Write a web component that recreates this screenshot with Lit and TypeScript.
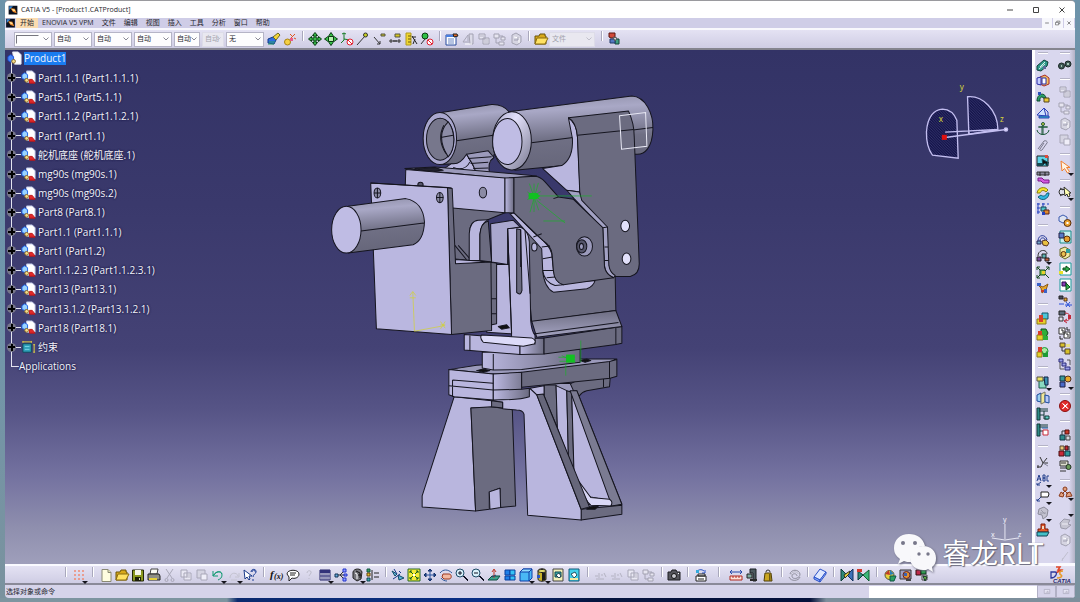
import { LitElement, html, svg, css } from 'lit';
import { customElement, property } from 'lit/decorators.js';

/* Each glyph is a list of layers, "fill,stroke,path", on a 16 x 16 grid. */
const GLYPHS: Record<string, string[]> = {
  brush: ['#2f6fe0,#123a8c,M2 8l5-2 3 3-2 4-6-1z', '#f4d63a,#6d6a20,M7 6l5-4 2 2-4 5z', '-,#2b9a6a,M2 13h6M3 11h6'],
  wizard: ['#f5d042,#a98213,M2.5 11a3 3 0 1 0 6 0a3 3 0 1 0-6 0', '-,#e0551f,M8 8l5-5M8 3l2 2M12 7l2 1', '#e85c8a,-,M8 7h3v3h-3z'],
  move4: ['#39b54a,#073c10,M8 1.500l2.500 3h-1.500v2.500h2.500v-1.500l3 2.500-3 2.500v-1.500h-2.500v2.500h1.500l-2.500 3-2.500-3h1.500v-2.500h-2.500v1.500l-3-2.500 3-2.500v1.500h2.500v-2.500h-1.500z'],
  snap4: ['#39c54a,#0a3b12,M8 1.500l2 3 1.500 1.500 3 2-3 2-1.500 1.500-2 3-2-3-1.500-1.500-3-2 3-2 1.500-1.500z', '#b9f0b0,#0a3b12,M5.500 5.500h5v5h-5z'],
  axisNo: ['-,#147a24,M5 2v7l-3 3M5 8l6 1M3 3l2-1 2 1', '#fff,#e02030,M8 11a3 3 0 1 0 6 0a3 3 0 1 0-6 0M9 9l4 4'],
  pin: ['-,#333,M2 14l8-9', '#c8d020,#333,M8.500 4a2 2 0 1 0 4 0a2 2 0 1 0-4 0'],
  lineIn: ['-,#333,M3 6l6 7M9 10v3h-3', '#c8c020,#554,M10 3h4v2h-4z'],
  dimIn: ['-,#333,M2 10h12M4 8v4M12 8v4M7 9v2M9 9v2', '#d8c820,#554,M8 3h5v3h-5z'],
  ruler: ['#f0d630,#b09a20,M3 2h5v12h-5z', '-,#6b5b10,M5 5h3M5 8h3M5 11h3', '-,#222,M9 5l5 8M12 8l-2 5M9 6h4'],
  greenNo: ['#2fbf45,#0a3b12,M3 5a3 3 0 1 0 6 0a3 3 0 1 0-6 0', '-,#333,M2 13l4-5', '#fff,#e02030,M8 11a3 3 0 1 0 6 0a3 3 0 1 0-6 0M9 9l4 4'],
  props: ['#fff,#24489c,M2 4h10v10h-10z', '#4a7fe0,-,M2 4h10v2h-10z', '-,#6b87c4,M4 8h6M4 10h6M4 12h6', '#e06a2a,#222,M9 3h4l1 2-4 1z'],
  offTree: ['-,#a8a7b8,M3 11l5-7M8 4v8M3 11h4', '#dcdbe8,#a3a2b2,M9 3h4v10h-3z', '-,#fff,M5 13h7'],
  offPage: ['#e6e5f0,#a3a2b2,M3 3h6v5h-6zM7 7h6v6h-6z', '-,#b5b4c4,M4 5h4M8 9h4M8 11h4'],
  offLinks: ['#e6e5f0,#a3a2b2,M2 3h5v4h-5zM9 6h4v3h-4zM7 11h5v3h-5z', '-,#a3a2b2,M4 7v5h3M7 5h4v1'],
  offGear: ['#d6d5e2,#a3a2b2,M4 4l4-2 5 3v6l-4 3-5-2z', '-,#fff,M6 6l5 1v5', '-,#9f9eb0,M6 9h4v-3'],
  offCut: ['-,#a8a7b8,M4 2l6 9M11 2l-6 9M3 13a1.500 1.500 0 1 0 3 0a1.500 1.500 0 1 0-3 0M9 13a1.500 1.500 0 1 0 3 0a1.500 1.500 0 1 0-3 0'],
  offCopy: ['#e9e8f3,#a8a7b8,M3 3h6v7h-6zM6 6h7v7h-7z', '-,#b8b7c6,M8 8h4M8 10h4'],
  offPaste: ['#d5d4e2,#a8a7b8,M3 3h8v8h-8z', '#efeef8,#a8a7b8,M7 7h6v6h-6z'],
  offRedo: ['-,#c4c3d0,M4 11c0-6 7-6 8-2M13 6v4h-4M5 13h6'],
  offDots: ['-,#b4b3c2,M2 9h3M6 6v5M8 8h2M11 6l2 4M3 12h8'],
  offQ: ['-,#bdbccb,M6 6c0-3 5-3 4 0l-2 3M8 11v1'],
  folder: ['#d8a81a,#6b540a,M2 5h4l1-2h5v2h1v8h-11z', '#ffe163,#8a6c10,M4 7h11l-3 6h-10z'],
  catalog: ['#d04a3a,#5a1410,M3 2h6v5h-4l-2-1z', '#3f9f80,#16443a,M9 8h4v5h-4z', '#5478c0,#203a6a,M4 8h5v4h-5z', '#efefef,#555,M7 6l4 1-2 3z'],
  griddots: ['-,#ef8a72,M3 4h2M7 4h2M11 4h2M3 8h2M7 8h2M11 8h2M3 12h2M7 12h2M11 12h2M4 3v2M8 3v2M12 3v2M4 7v2M8 7v2M12 7v2M4 11v2M8 11v2M12 11v2'],
  newdoc: ['#fffde0,#8a8974,M4 2.500h6l3 3v9h-9z', '#e8e6b8,#8a8974,M10 2.500v3h3'],
  save: ['#8a981f,#22260a,M2.500 3h11v11h-11z', '#f6f6ea,-,M5 3h6v5h-6z', '#1d2008,-,M5 10h6v4h-6z', '#d8d8c0,-,M9 11h1v2h-1z'],
  print: ['#fbfbf4,#444,M5 2h7l-1 5h-7z', '#8f8f86,#222,M2 7h11l1 2v4h-12z', '#e4cf3a,-,M3 11h8v2h-8z'],
  undo: ['-,#0f9a72,M3 9c2-5 9-5 9-1c0 3-2 4-4 5M3 4v5h5', '-,#0f9a72,M4 8c2-4 7-5 8-1'],
  whats: ['#fff,#1a3a8a,M2 3l1 9 2-2 2 3 1-1-1-3h3z', '-,#1d3f96,M9 5c0-4 6-3 5 0c0 2-3 2-3 5M11 12v2', '-,#1d3f96,M10 5c0-3 4-2 3 0'],
  bubble: ['#fff,#222,M2 7c0-5 12-5 12 0c0 4-5 5-7 4l-3 3v-4z', '-,#222,M5 6h6M5 8h5'],
  table: ['#fff,#222266,M3 3h10v10h-10z', '#33337a,-,M3 3h10v3h-10z', '-,#33337a,M5 6v7M7 6v7M9 6v7M11 6v7M3 9h10'],
  graph: ['-,#333,M3 8h4l4-4M7 8l4 0M7 8l4 4', '#8ea0ff,#2233cc,M10 2h3v3h-3zM11 7h3v2h-3zM10 11h3v3h-3z', '#6ad,#135,M2 7h3v3h-3z'],
  lock: ['#77777c,#222,M4 5c1-4 8-4 9 0l-1 7-4 2-4-3z', '-,#fff,M6 6l2 1v5', '-,#111,M7 4l4 2v5M9 8h3'],
  rules: ['#38a058,#154,M2 2h3v3h-3z', '#e0c030,#641,M2 6h3v3h-3z', '#3aa,#145,M2 11h3v3h-3z', '-,#222,M7 3v10M9 6h5M9 10h5'],
  fly: ['#5fb7d8,#114a66,M2 4l5 3-2 2zM8 8l6 3-5 2z', '-,#1a3a8a,M3 12l3-2 4-3M9 4l2 2M4 2l3 5'],
  fit: ['#f4ec35,#2a6b2a,M2 2h12v12h-12z', '-,#145a20,M4 4l3 3M12 4l-3 3M4 12l3-3M12 12l-3-3M4 6v-2h2M10 4h2v2M4 10v2h2M12 10v2h-2', '#fff,-,M7 7h2v2h-2z'],
  pan: ['-,#24509c,M8 2v12M2 8h12', '#24509c,#16336b,M8 2l2 2h-4zM8 14l2-2h-4zM2 8l2-2v4zM14 8l-2-2v4z'],
  rotate: ['#f2b9a2,#9c3a24,M5 7h6c3 0 3 5 0 5h-5l-2-2z', '-,#2f5a9c,M2 6c3-4 8-4 12 0M3 11c1 2 4 3 6 3'],
  zoomin: ['#d9f1fa,#1d4b66,M2 6a4 4 0 1 0 8 0a4 4 0 1 0-8 0', '-,#112,M9 9l5 5M10 9l4 4M4 6h4M6 4v4'],
  zoomout: ['#d9f1fa,#1d4b66,M2 6a4 4 0 1 0 8 0a4 4 0 1 0-8 0', '-,#112,M9 9l5 5M10 9l4 4M4 6h4'],
  normal: ['#3ba38c,#0f4a3e,M2 13l4-4h8l-3 4z', '-,#c03a2a,M8 11v-8M6 5l2-3 2 3', '-,#247,M6 10l4-2'],
  views: ['#1f7fe8,#0a3f9c,M3 3h5v5h-5zM3 9h5v4h-5z', '#35c2f5,#0a3f9c,M8 3h5v5h-5zM8 9h5v4h-5z'],
  cube: ['#49b8f5,#0f3fa8,M2 5l3-3h9v9l-3 3h-9z', '#8fdcff,#0f3fa8,M2 5l3-3h9l-3 3z', '-,#0f3fa8,M11 5v9'],
  shade: ['#c9b22a,#222,M4 4c0-3 8-3 8 0v8c0 3-8 3-8 0z', '#1c1c1c,-,M8 5h3.500v8l-3.500 1z', '#e8e070,#222,M4 4c0-2 8-2 8 0c0 2-8 2-8 0', '#2b58c4,-,M3 8h3v3h-3z'],
  hide: ['#f2f0b8,#444,M3 2h10v12h-10z', '#39b0a8,#145,M5 5h6v5h-6z', '#fff,#245,M6 8l3-2 2 3-2 2z'],
  swap: ['#43d0ea,#145a78,M3 2h10v12h-10z', '#fff,#256,M5 7l4-2 2 3-3 3z', '#f2e9a0,-,M4 11h8v2h-8z'],
  camera: ['#55555c,#1c1c20,M2 5h3l1-2h4l1 2h3v8h-12z', '#c8c8d0,#111,M5.500 9a2.500 2.500 0 1 0 5 0a2.500 2.500 0 1 0-5 0', '#fff,-,M12 6h1v1h-1z'],
  printer2: ['-,#2753c4,M4 6c0-4 5-4 7-2M12 3v3h-3', '#3ad,-,M3 3h3v3h-3z', '#fff,#222,M3 9h10v5h-10zM5 7h7v2h-7z', '-,#222,M5 12h6'],
  measure: ['-,#2346a8,M2 5h12M4 3l-2 2 2 2M12 3l2 2-2 2', '#fbe0d8,#b02a20,M2 9h12v4h-12z', '-,#b02a20,M5 9v2M8 9v2M11 9v2'],
  caliper: ['#4d5a60,#1a2024,M6 2h6v12h-3v-8h-3z', '#7fa8a0,#222,M3 7h5v4h-5z', '#2a2a2a,-,M6 12h7v2h-7z'],
  weight: ['#c9a520,#4f3f08,M5 6h6l1 8h-8z', '-,#333,M6 5a2 2 0 1 1 4 0', '#6d5a10,-,M9 7h1.500v7h-1.500z'],
  swirl: ['-,#8e8e9c,M3 7c1-5 9-5 10 0c0 5-8 6-8 2c0-3 5-3 5 0M13 10c-1 4-9 5-11 0', '-,#b8b8c4,M4 8c0-4 7-4 7-1'],
  eraser: ['#dfe7ff,#2a50c8,M2 10l6-8 6 3-6 8z', '#8fb0ff,#2a50c8,M2 10l6 3v2l-6-3z', '#b8ccff,#2a50c8,M8 13l6-8v2l-6 8z'],
  flipA: ['#2f8a7a,#0c3a36,M2 2l6 6-6 6z', '#3c72b8,#10305c,M14 2l-6 6 6 6z', '#e8d23a,#332,M5 8l6-4-1 3-4 4z'],
  flipB: ['#2f8a7a,#0c3a36,M3 4l5 4-5 5z', '#3cb87a,#105c30,M14 3l-6 5 6 6z', '#d23a2a,-,M2 2h5v3h-5z'],
  mat1: ['#e8d23a,#553,M3 8a4.500 4.500 0 1 0 9 0a4.500 4.500 0 1 0-9 0', '#c0392b,-,M3 7l4-4 1 5z', '#2980b9,-,M8 3l4 4-4 1z', '#2ca060,#154,M8 9h6l-2 5h-4z'],
  mat2: ['#a0a0c0,#333,M2 3h11v9h-11z', '#e09030,#622,M5 8a3.500 3.500 0 1 0 7 0a3.500 3.500 0 1 0-7 0', '#3a60b0,-,M6 6h3v3h-3z', '#444,-,M8 12h5v2h-5z'],
  mat3: ['#c02a4a,#311,M2 3h5v5h-5z', '#2aa04a,#132,M7 2h5v5h-5z', '#dfe0f0,#444,M8 8h5v5h-5z', '#6fc04a,#132,M9 9l4 1-2 4z'],
  clip: ['#2f9a8a,#0d4038,M2 9l7-6 4 2-1 4-6 5-4-1z', '-,#d8f0ea,M5 10l5-5M4 12l6-5', '#5a6a9a,-,M8 9h3v3h-3z'],
  contact: ['#f0c060,#a82a2a,M5 4l5-2 4 3v6l-5 2-4-2z', '#c4ccff,#2a2aa8,M2 5l4-1v8l-4-1z', '#fff,#2a2aa8,M7 5h4v6h-4z'],
  offset: ['#2aa06a,#0a4a2a,M2 12c0-8 8-9 9-3h-3c0-2-4-1-3 3z', '#e8c830,#542,M9 9h5v4h-5z', '#2a50b8,-,M3 3h3v3h-3z'],
  angle: ['#cfe0ff,#2a40b8,M2 10l7-7 2 8z', '#2fb0c0,#2a40b8,M4 11h10v2h-10z', '-,#2a40b8,M9 3l4 4v4'],
  anchor: ['-,#1f5a3a,M8 4v10M4 6h8M2 9c1 6 11 6 12 0', '#c8d040,#1f5a3a,M6.500 3a1.500 1.500 0 1 0 3 0a1.500 1.500 0 1 0-3 0', '-,#1f5a3a,M3 6h10M7 5v9'],
  paperclip: ['-,#77778a,M3 12l6-8c2-1 4 1 3 2l-5 7c-1 1-3 0-2-1l4-6'],
  quick: ['#5fd4e8,#222,M2 3h11v10h-11z', '#164a54,-,M2 10h6v3h-6z', '#111,#164a54,M7 6l1 6 2-2 2 3 1-1-1-2h2z', '#e04a3a,-,M10 2h3v3h-3z'],
  flex: ['#8a8a9c,#333,M2 3h12v3h-12z', '#d45ae0,#7a1a88,M3 9h4l2 2h5v3h-6l-2-2h-3z', '-,#222,M5 3v4M10 3v4'],
  change: ['#f4e62a,#8a8010,M2 8c1-6 8-7 11-3l-2 2c-3-3-5-1-6 1z', '#2fb8e0,#15607a,M3 12l3-2c2 2 5 1 6-2h2c0 6-7 9-11 4z'],
  reuse: ['-,#2340c0,M2 3h3M7 3h3M12 3h2M2 7h3M2 11h3M3 2v11M8 2v4', '#4fc0c8,#145,M6 6h5v4h-5z', '#e08a2a,#522,M9 9h5v4h-5z', '#2340c0,-,M7 11h3v3h-3z'],
  manip: ['-,#2b3f9c,M3 9c0-7 8-7 9-1M5 9c0-4 5-4 5-1', '#e8c040,#532,M7 9l4-1 3 3-2 3-4-1z', '#7ac,#225,M2 9h4v3h-4z'],
  snapPart: ['-,#333,M3 8c0-7 9-7 9-2', '#7a4a9a,#222,M2 9h4v4h-4z', '#5ab0b0,#222,M7 6h4v4h-4z', '#c05a3a,#222,M10 10h4v3h-4z'],
  explode: ['-,#174a20,M2 3l4 4M14 3l-4 4M2 14l4-4M14 14l-4-4M2 6v-3h3M11 3h3v3M2 11v3h3', '#7ac84a,#174a20,M5 6h5v5h-5z', '#e8d02a,-,M7 7h3v3h-3z'],
  clash: ['#e8a82a,#8a5a1a,M3 5l5 2 5-3-2 6-4 3-1-5z', '#3a62c8,-,M2 3h4v3h-4zM9 9h3v4h-3z', '#c83a2a,-,M6 10h3v2h-3z'],
  stackRed: ['#4fc4d8,#156,M7 2h6v6h-6z', '#e8cf2a,#8a7a1a,M2 8h9v5h-9z', '#d8402a,-,M4 4h4v7h-4z'],
  stackGreen: ['#2fae3a,#134a18,M6 2h5l2 4-2 4h-5z', '#e8cf2a,#8a7a1a,M2 8h6v5h-6z', '#d8402a,-,M3 4h4v4h-4z', '#2fae3a,-,M8 9h5v4h-5z'],
  stackRing: ['#a8e8a0,#1d9a34,M6 8a3.500 3.500 0 1 0 7 0a3.500 3.500 0 1 0-7 0M7 8a2.500 2.500 0 1 0 5 0', '#e8cf2a,#8a7a1a,M2 9h5v5h-5z', '#d8402a,-,M3 4h4v5h-4z', '#1d9a34,-,M8 10h5v4h-5z'],
  section: ['#8adac0,#185a48,M4 6h7v8h-7z', '#e8e060,#554,M2 3h6v4h-6z', '#3a8fb0,#124,M9 3h4v8h-3z'],
  mirror: ['#9ad0f0,#1a4a9c,M2 5l4-2v9l-4-1z', '#f0e89a,#776,M6 4l4-2v10l-4 2z', '#b8c8f8,#1a4a9c,M10 5l4 1v7l-4-1z'],
  treeTeal: ['#2f8a86,#123a38,M2 2h3v12h-3z', '-,#123a38,M4 3h9M4 5h9M5 9h4M9 5v8h4', '#5fd0c8,#123a38,M10 10h4v3h-4z'],
  treeRed: ['#2f8a86,#123a38,M2 2h3v12h-3z', '-,#123a38,M4 3h9M4 5h9M5 9h4', '#fff,#c82a3a,M8 8h5v5h-5z', '-,#2f6ab0,M7 6h6'],
  weld: ['-,#333,M5 3l3 6 4-5M2 13h4l2-4h5M3 11v3', '-,#8a8aa0,M8 9l5 3'],
  textNote: ['-,#24408c,M2 10l2-6 2 6M3 8h3M8 4v6M8 4h2v3h-2M8 7h2v3h-2M14 5h-2v5h2', '-,#24408c,M2 14l4-3M2 12v2h3'],
  flag: ['#fff,#222,M6 4h7l1 2-1 3h-7z', '-,#24408c,M2 13l4-4M2 11v2h3'],
  ghost: ['#c3c2d0,#8a8a98,M4 4l5-2 4 3-1 6-4 3-1-4-4-1z', '-,#9a9aa8,M6 5l4 4M5 8h6'],
  stamp: ['#e85a2a,#7a1a0a,M6 2h4v5h3v3h-10v-3h3z', '#45c0c8,#145,M2 10h12l-2 4h-10z', '#f0d8c0,-,M7 4h2v3h-2z'],
  gears: ['#3f5a56,#1a2624,M1.500 9a3 3 0 1 0 6 0a3 3 0 1 0-6 0M8 7a3 3 0 1 0 6 0a3 3 0 1 0-6 0', '#a8c4b8,-,M4 8h1v2h-1zM10 6h2v2h-2z'],
  arrow: ['#fff4e4,#f08030,M4 2l1 10 2.500-2.500 3 4.500 2-1.500-3-4h3.500z'],
  select2: ['#dfe0ea,#333,M2 8a3 3 0 1 0 6 0a3 3 0 1 0-6 0', '#ffffb0,#333,M7 3l1 9 2-2 1 3 2-1-1-3h2z', '-,#333,M3 4l3 2M3 12l3-2'],
  gearA: ['#dfe4f0,#3a5ab0,M2 4l4-2 4 2v4l-4 2-4-2z', '#e8a030,#5a2f0a,M7 10a3.500 3.500 0 1 0 7 0a3.500 3.500 0 1 0-7 0', '#fff,-,M9.500 9h2v2h-2z'],
  gearB: ['#c8f0f0,#1a8a8a,M3 2h11v12h-11z', '#5a7ac8,#224,M2 4h5v5h-5z', '#e8a030,#5a2f0a,M7 10a3 3 0 1 0 6 0a3 3 0 1 0-6 0'],
  gearC: ['#f0e8a0,#6a6a2a,M3 4l5-2 5 3v6l-5 3-5-3z', '#2fa0a0,-,M9 4h4v4h-4z', '#e8c050,#5a2f0a,M4 9a2.500 2.500 0 1 0 5 0a2.500 2.500 0 1 0-5 0'],
  insert1: ['#fff,#1a9a9a,M3 2h11v12h-11z', '#2fb04a,#0a4a1a,M6 7h3v-2l4 3-4 3v-2h-3z', '#e8e02a,-,M2 10h4v3h-4z'],
  insert2: ['#fff,#1a9a9a,M3 2h11v12h-11z', '#8a3ab8,#2a0a4a,M5 5h4v4h-4z', '#2fb04a,#0a4a1a,M9 6l4 4-4 3z'],
  replace: ['-,#2a50d8,M9 9l4 5M13 9l-4 5M8 12h7', '#4a4a5a,#222,M2 3h4v3h-4z', '#e8b02a,#532,M7 5h3v3h-3z', '-,#2a50d8,M2 11h5'],
  reorder: ['#5a6a7a,#222,M2 2h6v4h-6z', '-,#c02a3a,M8 4c7 0 7 8 0 8M10 14l-3-2 3-2', '#dfe0ea,#333,M2 8h4v4h-4z', '#c02a3a,-,M11 6h3v4h-3z'],
  number: ['#fff,#333,M2 3h6v6h-6zM7 7h6v6h-6z', '-,#222,M4 5h2v3M9 9h2v3M10 2v3h3M3 11v3h3'],
  selLoad: ['#d8c02a,#543,M3 2h5v4h-5zM8 8h5v5h-5z', '-,#333,M5 6v4h3', '#e8e08a,-,M9 3h4v3h-4z'],
  manage: ['#9aa0e8,#2a2a7a,M2 2h4v3h-4zM5 6h4v3h-4zM8 10h5v3h-5z', '-,#555,M3 5v7h4M10 3h3v5'],
  multi: ['#3a9a9a,#134,M3 3h5v5h-5z', '#e8a82a,#532,M8 6a3 3 0 1 0 6 0a3 3 0 1 0-6 0', '#4a6ac8,#224,M3 9h5v5h-5z'],
  cancel: ['#e02a2a,#8a1010,M2.500 8a5.500 5.500 0 1 0 11 0a5.500 5.500 0 1 0-11 0', '-,#fff,M5.500 5.500l5 5M10.500 5.500l-5 5M6 5.500l5 5M10.500 6l-5 5'],
  sceneA: ['#2f8a8a,#134,M3 8h5v5h-5z', '#c83a2a,#511,M8 3h4v4h-4z', '#d8d8e0,#444,M9 9h4v4h-4z', '-,#333,M5 4v4M5 4h3'],
  sceneB: ['#c82a3a,#411,M2 8h5v5h-5zM8 3h3v4h-3z', '#2f9a9a,#134,M8 8h5v5h-5z', '#e8c87a,#543,M3 3h4v4h-4z', '-,#222,M12 3v4'],
  sceneC: ['#dfe0d0,#333,M3 2h8v5h-8z', '-,#333,M4 4h5M3 9h8M3 12h6', '#6a9a5a,#232,M9 8a2.500 2.500 0 1 0 5 0a2.500 2.500 0 1 0-5 0'],
  people: ['#e0a080,#8a3a1a,M6 5a2 2 0 1 0 4 0a2 2 0 1 0-4 0M2 12l2-4 3 2-1 3zM9 13l1-4 3-1 2 4z', '-,#8a3a1a,M5 10l3-3 3 3'],
  offShape: ['#c6c5d2,#9c9bab,M3 7l4-4 6 1-2 4 3 1-5 4-5-1z', '-,#efeef6,M5 8h6'],
  offPen: ['-,#c0bfce,M5 12l6-8M5 13l1-3'],
  part: ['#fff,#bfc8e8,M6 1h6l3 3v9h-9z', '#9ad4ff,#1c5fe8,M1 5l3-2 3 2v4l-3 1-3-1z', '#f4dc8a,#8a6a2a,M4 11a2 2 0 1 0 4 0a2 2 0 1 0-4 0', '#e02a2a,#c01414,M9 10h3l3 4h-6z'],
  product: ['#fff,#dfe4f4,M6 1h6l3 3v10h-7z', '#4a8af8,#1c4fd8,M1 6l3-2 3 2v4l-3 2-3-2z', '#f4dc8a,#8a6a2a,M5 11a2 2 0 1 0 4 0a2 2 0 1 0-4 0'],
  constraint: ['#2fa0b8,#0c4a5c,M2 4h9v9h-9z', '-,#e8d840,M2 1v2M11 1v2M2 2h9M13 5h2M13 13h2M14 5v8', '-,#7ad8e8,M4 7h5M4 10h5'],
  catia: ['#0a0f1c,-,M1 1h14v14h-14z', '#3a8ad8,-,M2 2h6l-6 6z', '#f08a2a,-,M4 5l7 1 3 7-6-2z', '#ffe9a0,-,M6 6l4 1 2 3-4-1z'],
  min: ['-,#444,M5 8h6'],
  max: ['-,#444,M5.500 5.500h5v5h-5z'],
  close: ['-,#444,M5.500 5.500l5 5M10.500 5.500l-5 5'],
  restore: ['-,#555,M4 7h5v4h-5zM6 7v-2h5v4h-2'],
  pane: ['#e6e5f4,#a9a8bc,M4 5h8v6h-8z', '-,#a9a8bc,M6 9h5M9 7v2'],
};

@customElement('cad-icon')
export class CadIcon extends LitElement {
  @property() name = '';
  static styles = css`
    :host { display: block; width: 16px; height: 16px; }
    svg { display: block; width: 100%; height: 100%; }
    text { font: italic 700 11px 'Liberation Serif', serif; fill: #111; }
    .arg { font-size: 8px; }
  `;
  render() {
    if (this.name === 'fx') {
      return html`<svg viewBox="0 0 16 16"><text x="1" y="11">f</text><text class="arg" x="5" y="12">(x)</text></svg>`;
    }
    return html`<svg viewBox="0 0 16 16">
      ${(GLYPHS[this.name] ?? []).map((layer) => {
        const [fill, stroke, d] = layer.split(',');
        return svg`<path d=${d} fill=${fill === '-' ? 'none' : fill} stroke=${stroke === '-' ? 'none' : stroke} stroke-width="1"></path>`;
      })}
    </svg>`;
  }
}

/* Toolbar entries: an icon name, "name>" for one with a fly-out, or a divider. */
type Entry = string;

@customElement('cad-toolbar')
export class CadToolbar extends LitElement {
  @property({ type: Array }) items: Entry[] = [];
  @property({ type: Boolean, reflect: true }) vertical = false;
  static styles = css`
    :host { display: flex; align-items: center; }
    :host([vertical]) { flex-direction: column; }
    button { position: relative; flex: none; width: 16px; height: 16px; padding: 0; border: 0; background: none; }
    button.roomy { height: 17px; }
    .fly { position: absolute; right: -1px; bottom: -1px; width: 0; height: 0; border: 3px solid transparent; border-top-color: #15151c; border-bottom: 0; }
    .sep { flex: none; display: flex; justify-content: center; width: 11px; height: 10px; align-self: flex-start; }
    .sep::before { content: ''; width: 1px; background: #a9a8bc; border-right: 1px solid #fff; }
    .sep.narrow { width: 9px; }
    .sep.wide { width: 19px; }
    :host([vertical]) .sep { width: 10px; height: 11px; margin: 0; align-items: center; align-self: center; }
    :host([vertical]) .sep::before { width: 10px; height: 1px; border: 0; border-bottom: 1px solid #fff; background: #b4b3c6; }
    :host([vertical]) .sep.narrow { height: 9px; }
    :host([vertical]) .sep.medium { height: 13px; }
    :host([vertical]) .sep.wide { height: 15px; }
  `;
  render() {
    let roomy = false;
    return this.items.map((item) => {
      if (item === '=') { roomy = true; return null; }
      if (item.startsWith('|')) {
        const size = { '|n': 'narrow', '|m': 'medium', '|w': 'wide' }[item] ?? '';
        return html`<span class="sep ${size}"></span>`;
      }
      const name = item.replace('>', '');
      return html`<button class=${roomy ? 'roomy' : ''} aria-label=${name || 'tool'}>
        <cad-icon name=${name}></cad-icon>${item.endsWith('>') ? html`<span class="fly"></span>` : null}
      </button>`;
    });
  }
}

const TOP_A = ['brush', 'wizard', '|n', 'move4', 'snap4', 'axisNo', 'pin', 'lineIn', 'dimIn', 'ruler', 'greenNo', '|n', 'props', 'offTree', 'offPage', 'offLinks', 'offGear', '|n', 'folder'];
const BOTTOM = ['|', 'griddots>', '|', 'newdoc', 'folder', 'save', 'print', 'offCut', 'offCopy', 'offPaste', 'undo>', 'offRedo>', 'whats', '|', 'fx', 'bubble', 'offQ', 'table>', 'graph', 'lock>', 'rules', '|n', 'fly', 'fit', 'pan', 'rotate', 'zoomin', 'zoomout', 'normal', 'views', 'cube>', 'shade>', 'hide', 'swap', '|', 'offDots', 'offDots', 'offCopy', 'offLinks', '|n', 'camera', '|', 'printer2', '|w', 'measure', 'caliper', 'weight', '|', 'swirl', '|n', 'eraser', '|', 'flipA', 'flipB', '|', 'mat1', 'mat2', 'mat3'];
const DOCK_A = ['clip', 'contact', 'offset', 'angle', 'anchor', 'paperclip', 'quick', 'flex', 'change', 'reuse', '|w', 'manip', 'snapPart>', 'explode', 'clash', '|w', 'stackRed', 'stackGreen', 'stackRing', '|w', 'section>', 'mirror', 'treeTeal', 'treeRed', '|w', '=', 'weld', 'textNote>', 'flag>', 'ghost>', 'stamp'];
const DOCK_B = ['gears', '|', 'offPage', 'offLinks', 'offGear', 'offPaste', '|', 'arrow>', '|n', 'select2>', '|m', 'gearA', 'gearB', 'gearC', 'insert1', 'insert2', 'replace', 'reorder', 'number', 'selLoad', 'manage', 'multi>', '|n', 'cancel', '|m', 'sceneA', 'sceneB', 'sceneC', '|n', 'people>', '>', 'offShape', 'offGear', 'offPen'];

const MENUS = ['文件', '编辑', '视图', '插入', '工具', '分析', '窗口', '帮助'];
const PARTS = ['Part1.1.1 (Part1.1.1.1)', 'Part5.1 (Part5.1.1)', 'Part1.1.2 (Part1.1.2.1)', 'Part1 (Part1.1)', '舵机底座 (舵机底座.1)', 'mg90s (mg90s.1)', 'mg90s (mg90s.2)', 'Part8 (Part8.1)', 'Part1.1 (Part1.1.1)', 'Part1 (Part1.2)', 'Part1.1.2.3 (Part1.1.2.3.1)', 'Part13 (Part13.1)', 'Part13.1.2 (Part13.1.2.1)', 'Part18 (Part18.1)'];

const LIGHT = '#b9b6de';
const DARK = '#6b6b80';
const MID = '#9b9abb';
const face = (d: string, fill = LIGHT) => svg`<path d=${d} fill=${fill}></path>`;
const edge = (d: string) => svg`<path d=${d} fill="none"></path>`;

@customElement('cad-scene')
export class CadScene extends LitElement {
  static styles = css`
    :host { display: block; }
    svg { display: block; width: 100%; height: 100%; }
    .solid { stroke: #15151f; stroke-width: 3px; stroke-linejoin: round; }
    .green { stroke: #16b425; stroke-width: 2px; fill: none; }
    .yellow { stroke: #d3d32a; stroke-width: 2px; fill: none; }
    .compass { stroke: #c3bef0; stroke-width: 4px; }
    text { font-family: 'Noto Sans', sans-serif; stroke: none; }
    .cl { font-size: 8px; fill: #d8d83a; }
    .al { font-size: 7px; fill: #f2f2fa; }
  `;
  render() {
    return html`<svg viewBox="5 50 1027 513" preserveAspectRatio="xMidYMid slice" role="img" aria-label="Product1">
      <defs>
        <linearGradient id="tube" x1="0" y1="0" x2=".12" y2="1">
          <stop offset="0" stop-color="#8d8da6"></stop><stop offset=".22" stop-color="#a9a8c6"></stop><stop offset=".62" stop-color="#6f6f84"></stop><stop offset="1" stop-color="#66667a"></stop>
        </linearGradient>
        <linearGradient id="round" x1="0" x2="1"><stop offset="0" stop-color="#bcb9e2"></stop><stop offset="1" stop-color="#6b6b80"></stop></linearGradient>
        <linearGradient id="rim" x1="0" y1="0" x2="1" y2="1"><stop offset="0" stop-color="#a5a4c6"></stop><stop offset=".35" stop-color="#e2e0fa"></stop><stop offset="1" stop-color="#77778e"></stop></linearGradient>
        <linearGradient id="flare" x1="0" y1="0" x2="0" y2="1"><stop offset="0" stop-color="#6d6d82"></stop><stop offset="1" stop-color="#a5a4c2"></stop></linearGradient>
        <pattern id="hatch" width="8" height="8" patternUnits="userSpaceOnUse"><rect width="8" height="8" fill="#15154a"></rect><path d="M0 0l8 8" stroke="#42427c" stroke-width="2"></path></pattern>
      </defs>

      <g class="solid" transform="translate(320 290) scale(.33333)">
        ${face('M785 262L870 262L868 288L800 300Q785 304 778 315L740 285Z', DARK)}
        ${edge('M850 264V290')}
        ${face('M387 237L470 224L780 205L890 205L868 215L605 248L520 250Z', MID)}
        ${face('M470 240L490 235L510 240L490 245Z', '#111')}
        ${face('M780 210L800 205L812 210L795 215Z', '#111')}
        ${face('M487 185L780 175V215L605 237L520 238L487 232Z', 'url(#round)')}
        ${edge('M520 190V238')}
        ${face('M672 280L750 278L760 300L770 300L905 640L875 645L800 640L680 330Z', MID)}
        ${face('M672 283H708L712 412L672 316Z', DARK)}
        ${face('M708 285L740 300L745 500L712 412Z')}
        ${face('M740 300L755 305L762 560L745 505Z', DARK)}
        ${face('M755 310L872 630L812 618Q790 612 775 578L762 555Z')}
        ${face('M750 300L770 300L905 640L875 645Z', '#7b7b92')}
        ${face('M775 570L812 620L868 625Q880 632 872 645L812 643Q795 630 775 575Z', '#d9d7f6')}
        ${face('M783 655L905 643V670L783 687Z', DARK)}
        ${face('M805 648L835 645L825 655L800 655Z', '#111')}
        ${face('M403 318L515 330L520 350L453 352L467 660L307 648V615Z')}
        ${face('M453 352L515 348L577 357L587 645L542 650L540 592L508 603V655L467 660Z', DARK)}
        ${face('M508 603L540 592L542 650L510 655Z')}
        ${face('M515 328L605 322L630 293L650 312L783 655V687L623 673L612 370Q608 358 590 358L548 354V335L515 330Z')}
        ${face('M515 330L548 335V352L515 348Z', DARK)}
        ${face('M630 293L672 285V312L650 312Z')}
        ${face('M650 312L670 310L808 648L783 655Z', '#66667a')}
        ${face('M387 237L520 250V328L403 318L387 312Z')}
        ${face('M520 250L605 245V296L628 293V318Q600 328 520 328Z', 'url(#round)')}
        ${face('M605 245L868 213L890 207V257L870 263L605 290Z', DARK)}
        ${edge('M387 285L520 298L605 296M398 268L520 278M398 268V318M868 213V263')}
        ${face('M433 132L600 145V192L433 178Z')}
        ${face('M600 145L672 142V190L600 192Z', 'url(#round)')}
        ${face('M672 142L905 108V158L887 162L672 190Z', DARK)}
        ${edge('M450 135V180M887 112V162')}
      </g>

      <g class="solid" transform="translate(320 80) scale(.33333)">
        ${face('M500 545L530 548L532 735L510 740Z', DARK)}
        ${edge('M513 655H532M513 700H532')}
        ${face('M530 552L575 552L577 760L500 755L505 735L530 730Z')}
        ${face('M535 738L560 733L568 742L545 746Z', '#111')}
        ${face('M610 450L885 590L887 690L635 724Z', DARK)}
        ${face('M635 722L887 690L905 738L650 770Z', 'url(#flare)')}
        ${edge('M640 760L895 726')}
        ${face('M563 445L600 440Q630 450 628 500L632 720Q634 750 645 765V790L575 770Z')}
        ${face('M485 763L635 772Q652 780 642 790L610 797L490 785Q478 772 485 763Z', '#dcdaf8')}
        ${face('M398 380L560 395L500 420Q450 420 450 450L448 540L400 535Z', DARK)}
        ${face('M405 537L500 543L405 556Z')}
        ${edge('M405 495L440 538M415 495L450 535')}
        ${face('M448 540V460Q450 422 475 420L505 418Q482 430 480 462V540Z')}
        ${face('M480 462Q482 428 505 422L515 545L480 540Z', DARK)}
        ${face('M512 430L580 420L600 440L563 445V552L515 545Z', '#a9a7ce')}
        ${face('M590 445L602 448L606 630Q602 648 590 636Z', DARK)}
        ${edge('M563 445L575 760M602 448V560M615 450L630 640')}
        ${face('M668 570Q672 620 700 635L800 625Q820 618 825 600L730 608Z')}

        ${face('M365 97L515 73Q550 72 567 95L540 160L520 232L420 250L360 253Z', 'url(#tube)')}
        ${edge('M410 182L520 165')}
        ${face('M368 268L395 250Q420 255 440 222L475 283Z', LIGHT)}
        ${face('M440 222L505 212L522 232Q500 245 510 285L470 280Q460 250 440 222Z', MID)}
        ${edge('M445 235L515 230M452 250L505 246M460 265L505 263M400 262Q435 275 450 245')}
        <ellipse cx="360" cy="175" rx="50" ry="78" fill="#a9a7ce"></ellipse>
        <ellipse cx="361" cy="177" rx="41" ry="63" fill="#77778c"></ellipse>
        ${face('M385 125Q345 165 385 230Q402 212 402 177Q400 145 385 125Z', '#8c8ca6')}
        ${edge('M362 172L400 165M372 135Q350 175 378 220')}

        ${face('M255 265L345 260L650 287L555 295Z', MID)}
        ${face('M285 265L345 262L370 270L320 273Z', '#22222e')}
        ${face('M258 268L555 293V397L398 383L255 370Z')}
        ${face('M555 293L582 292V398L555 397Z', 'url(#round)')}
        <ellipse cx="489" cy="337" rx="11" ry="16" fill="#8b8ba4"></ellipse>
        <ellipse cx="302" cy="314" rx="8" ry="8" fill="#55556a"></ellipse>

        ${face('M567 95L935 48C975 50 1000 100 998 148C996 200 975 226 945 222L730 256L585 270Z', 'url(#tube)')}
        ${edge('M634 188L998 142')}
        <ellipse cx="576" cy="182" rx="58" ry="87" fill="url(#rim)"></ellipse>
        <ellipse cx="562" cy="184" rx="44" ry="69" fill="#bfbce4"></ellipse>

        ${face('M745 113Q770 130 772 170L780 335L740 330L668 265L725 256Q760 235 757 175Z')}
        ${face('M745 113L925 93Q942 130 942 170L957 550Q957 582 930 588L880 588Q862 575 862 555L860 445L780 362L772 170Q768 125 745 113Z', DARK)}
        ${face('M740 330L778 335L785 360L862 440L866 555Q870 578 885 585L880 592Q855 582 853 555L848 445L762 355Z', '#a3a2c4')}
        ${edge('M772 165L940 148')}

        ${face('M582 398L645 460Q690 495 695 520L700 570Q705 605 730 613L705 615Q672 605 668 570L665 505L620 455L570 400Z')}
        ${face('M582 292L645 288Q662 290 675 305L715 350L760 357L848 442L853 560Q858 582 880 592L730 613Q702 605 700 570L696 520Q692 495 668 480L582 398Z', DARK)}
        ${edge('M640 470L665 460M665 500L690 497M668 535L697 530M668 570L700 570M680 592L705 590M848 442L862 440M853 500H864M853 540H865M715 350L700 355')}
        <ellipse cx="793" cy="498" rx="24" ry="29" fill="#9b9abb"></ellipse>
        <ellipse cx="785" cy="498" rx="15" ry="20" fill="#55556a"></ellipse>
        <ellipse cx="784" cy="498" rx="6" ry="9" fill="#9b9abb"></ellipse>
        <ellipse cx="643" cy="500" rx="8" ry="12" fill="#b9b6de"></ellipse>
        <ellipse cx="915" cy="437" rx="13" ry="17" fill="#e2e0fa"></ellipse>
        <ellipse cx="919" cy="535" rx="13" ry="17" fill="#e2e0fa"></ellipse>

        ${face('M383 322L397 325L407 550L513 545L515 750L395 762Z', DARK)}
        ${face('M153 308L383 322L395 762L170 745Z', '#bab7e0')}
        ${edge('M153 308L395 323')}
        <ellipse cx="173" cy="338" rx="10" ry="15" fill="#8b8ba4"></ellipse>
        <ellipse cx="360" cy="352" rx="10" ry="15" fill="#8b8ba4"></ellipse>
        ${edge('M173 323V353M360 337V367M163 338H183M350 352H370')}
        <path d="M85 378L258 355Q310 365 314 425Q312 480 280 493L85 518Z" fill="url(#tube)" stroke="none"></path>
        ${edge('M258 355Q310 365 314 425Q312 480 280 493L85 518M124 452L312 428M85 378L258 355')}
        <ellipse cx="80" cy="448" rx="44" ry="70" fill="#bfbce4"></ellipse>
      </g>

      <g transform="translate(320 80) scale(.33333)">
        <path class="green" d="M625 347h190M650 360l85 68M670 422h65M628 310l28 80M655 308l-25 88M642 310v85M622 335l40 24M622 358l40-24"></path>
        <path d="M626 338h24l10 9-10 10h-24z" fill="#12c022"></path>
        <path class="green" d="M715 830h50M718 842h48M782 780v65M737 850v35M725 825l40 20"></path>
        <path d="M738 822h26v24h-26z" fill="#12c022"></path>
        <path class="yellow" d="M279 635L284 752L375 735M270 645l9-12 9 12M270 652h18M362 723l14 20M376 723l-14 22M362 733h14"></path>
        <path d="M898 107L976 97L980 198L904 207Z" fill="none" stroke="#e8e8f4" stroke-width="3"></path>
      </g>

      <g class="compass" transform="translate(900 0) scale(.33333)">
        <path d="M95 465Q76 440 77 395C80 350 100 328 125 327C150 328 162 345 168 360L172 474Z" fill="url(#hatch)"></path>
        <path d="M200 290C245 285 290 330 291 388L204 402Z" fill="url(#hatch)"></path>
        <path d="M133 396L291 388M133 412L315 388M204 402V390" fill="none"></path>
        <rect x="123" y="404" width="15" height="15" fill="#e01010" stroke="none"></rect>
        <circle cx="315" cy="388" r="5" fill="#e8e4ff"></circle>
      </g>
      <text class="cl" x="959" y="90">y</text><text class="cl" x="938" y="122">x</text><text class="cl" x="999" y="122">z</text>
      <path d="M1004 523V538M991 537L1004 539L1018 537" fill="none" stroke="#e6e6f2"></path>
      <text class="al" x="1002" y="521">y</text><text class="al" x="990" y="536">x</text><text class="al" x="1017" y="536">z</text>
    </svg>`;
  }
}

@customElement('app-root')
export class AppRoot extends LitElement {
  static styles = css`
    :host {
      display: block; box-sizing: border-box; height: 100vh; min-height: 590px; padding: 1px 5px 4px;
      background: linear-gradient(90deg, #7d95a0 0 21%, #0b2a6e 22%, #0a2f86 45%, #06153f 55%, #04103a 75%, #7d8f9c 76.5%) bottom / 100% 4px no-repeat, linear-gradient(#6d93aa, #7096ab 50%, #7a929e);
      font-family: 'Open Sans', 'Noto Sans CJK SC', sans-serif; color: #26262e;
    }
    .window { display: grid; grid-template-rows: auto auto auto 1fr auto auto; height: 100%; border-radius: 4px; overflow: hidden; background: #d6d4ea; box-shadow: 0 -1px 0 #9a9a9e; }
    button, select, input { font: inherit; color: inherit; }
    .title { display: flex; align-items: center; height: 17px; padding-left: 3px; background: #fff; font-size: 7px; }
    .title cad-icon { width: 10px; height: 10px; margin-right: 3px; }
    h1 { margin: 0; font-size: 7px; font-weight: 400; flex: 1; }
    .sys { width: 26px; height: 16px; padding: 0; border: 0; background: none; display: grid; place-items: center; }
    .title .sys cad-icon { width: 16px; height: 16px; margin: 0; }
    .menu { display: flex; align-items: center; height: 10px; background: #cfcde7; font-size: 7px; line-height: 10px; }
    .menu cad-icon { width: 11px; height: 10px; }
    .menu button { height: 10px; padding: 0 4px; border: 0; background: none; line-height: 10px; white-space: nowrap; }
    .menu .start { background: #fbdcb0; }
    .menu .mdi { width: 11px; padding: 0; background: #f7f7fc; border-right: 1px solid #cfcde7; }
    .menu .first { margin-left: auto; }
    .menu .mdi cad-icon { width: 10px; height: 10px; }
    .top { display: flex; align-items: center; height: 22px; box-sizing: border-box; padding-left: 9px; border-top: 2px solid #f8f8fd; border-bottom: 2px solid #85858f; background: linear-gradient(#e4e2f3, #cfcde4); }
    .combo { display: grid; align-items: center; margin-right: 2px; height: 15px; background: #fdfdfe; border: 1px solid #b5b4c6; box-sizing: border-box; }
    .combo > * { grid-area: 1 / 1; }
    .combo select { appearance: none; width: 100%; height: 13px; padding: 0 0 0 2px; border: 0; border-radius: 0; background: none; font-size: 7px; line-height: 12px; opacity: 1; }
    .combo svg { justify-self: end; width: 8px; height: 6px; margin-right: 1px; pointer-events: none; }
    .combo.off { background: #e9e8f0; color: #a2a2ac; border-color: #dddce8; }
    .w38 { width: 38px; } .w26 { width: 26px; } .w22 { width: 22px; } .w46 { width: 46px; }
    .swatch { align-self: stretch; margin: 2px 12px 2px 1px; border: 1px solid #77777f; border-right-color: #fff; border-bottom-color: #fff; pointer-events: none; }
    .body { display: grid; grid-template-columns: 1fr 43px; min-height: 0; }
    .view { position: relative; display: grid; overflow: hidden; min-height: 0; background: linear-gradient(#333366 0%, #3a396c 30%, #444275 58%, #565486 70%, #7472a0 83%, #8f8fae 93%, #9f9fbb 100%); border-left: 1px solid #55556a; margin-left: -1px; }
    .view > * { grid-area: 1 / 1; min-height: 0; }
    .tree { z-index: 1; justify-self: start; align-self: start; display: grid; grid-auto-rows: 1fr; height: 327px; margin: -1px 0 0; padding: 0 0 0 2px; list-style: none; font-size: 10px; line-height: 14px; color: #f4f4fb; text-shadow: 0 0 2px #1c1a48, 0 0 2px #1c1a48; }
    .tree li { display: flex; align-items: center; position: relative; white-space: nowrap; }
    .tree li::before { content: ''; position: absolute; left: 4px; top: 0; bottom: 0; width: 1px; background: #e4e4f0; }
    .tree li:first-child::before { top: 50%; }
    .tree li:last-child::before { bottom: 50%; }
    .tree cad-icon { width: 15px; height: 15px; margin-right: 2px; position: relative; }
    .knob { position: relative; width: 9px; height: 9px; padding: 0; border: 0; border-radius: 50%; background: linear-gradient(#000, #000) center / 7px 2px no-repeat, linear-gradient(#000, #000) center / 2px 7px no-repeat, #77778a; }
    .link { width: 5px; height: 1px; background: #e4e4f0; }
    .root { background: #1a7cf0; line-height: 13px; text-shadow: none; }
    .end { width: 8px; height: 1px; margin-left: 4px; background: #e4e4f0; }
    .dock { display: grid; grid-template-columns: 16px 16px; column-gap: 6px; align-items: start; box-sizing: border-box; padding: 2px 0 0; border-left: 3px solid #fff; background: linear-gradient(90deg, #d9d7ee 85%, #b3b2c6); }
    .dock cad-toolbar::before { content: ''; width: 10px; height: 1px; margin-bottom: 3px; background: #b4b3c6; border-bottom: 1px solid #fff; }
    .bottom { display: flex; align-items: center; height: 22px; box-sizing: border-box; padding-left: 55px; border-top: 3px solid #fafaff; border-bottom: 2px solid #8a8a98; background: linear-gradient(#e4e2f3, #cfcde4); }
    .logo { margin-left: auto; width: 27px; height: 18px; }
    .logo text { font: italic 700 6px 'Liberation Sans', sans-serif; fill: #27276a; }
    .status { display: flex; align-items: center; height: 13px; padding-left: 1px; font-size: 7px; line-height: 13px; }
    .status label { flex: 1; display: flex; justify-content: space-between; align-items: center; }
    .status input { width: 168px; height: 12px; box-sizing: border-box; border: 0; padding: 0 2px; background: #fff; }
    .status button { width: 19px; height: 13px; padding: 0; border: 1px solid #b2b1c6; background: #d6d4ea; display: grid; place-items: center; }
    .status button cad-icon { height: 11px; }
    .mark { position: absolute; z-index: 2; right: 36px; bottom: 30px; display: flex; align-items: center; gap: 5px; font: 400 28px/28px 'Noto Sans CJK SC', sans-serif; color: #fff; text-shadow: 1px 1px 1px #66667a, 0 0 1px #66667a; pointer-events: none; }
    .mark svg { width: 44px; height: 40px; filter: drop-shadow(1px 1px 1px #66667a); }
  `;

  private combo(size: string, value: string, label: string, off = false) {
    return html`<span class="combo ${size} ${off ? 'off' : ''}">
      <select aria-label=${label} ?disabled=${off}><option>${value}</option></select>
      ${value ? null : html`<span class="swatch"></span>`}
      <svg viewBox="0 0 8 6"><path d="M1.500 1.500l2.500 2.500 2.500-2.500" fill="none" stroke=${off ? '#c0bfca' : '#888894'}></path></svg>
    </span>`;
  }

  render() {
    return html`<div class="window">
      <header class="title">
        <cad-icon name="catia"></cad-icon>
        <h1>CATIA V5 - [Product1.CATProduct]</h1>
        ${['min', 'max', 'close'].map((n) => html`<button class="sys" aria-label=${n}><cad-icon name=${n}></cad-icon></button>`)}
      </header>
      <nav class="menu">
        <cad-icon name="catia"></cad-icon>
        <button class="start">开始</button>
        <button>ENOVIA V5 VPM</button>
        ${MENUS.map((m) => html`<button>${m}</button>`)}
        <button class="mdi first" aria-label="min"><cad-icon name="min"></cad-icon></button>
        <button class="mdi" aria-label="restore"><cad-icon name="restore"></cad-icon></button>
        <button class="mdi" aria-label="close"><cad-icon name="close"></cad-icon></button>
      </nav>
      <div class="top">
        ${this.combo('w38', '', 'color')}
        ${this.combo('w38', '自动', 'opacity')}
        ${this.combo('w38', '自动', 'line width')}
        ${this.combo('w38', '自动', 'line type')}
        ${this.combo('w26', '自动', 'point')}
        ${this.combo('w22', '自动', 'render', true)}
        ${this.combo('w38', '无', 'layer')}
        <cad-toolbar .items=${TOP_A}></cad-toolbar>
        ${this.combo('w46', '文件', 'catalog', true)}
        <cad-toolbar .items=${['|n', 'catalog']}></cad-toolbar>
      </div>
      <main class="body">
        <section class="view">
          <cad-scene></cad-scene>
          <ul class="tree">
            <li><cad-icon name="product"></cad-icon><span class="root">Product1</span></li>
            ${PARTS.map((p) => html`<li><button class="knob" aria-label="expand"></button><span class="link"></span><cad-icon name="part"></cad-icon>${p}</li>`)}
            <li><button class="knob" aria-label="expand"></button><span class="link"></span><cad-icon name="constraint"></cad-icon>约束</li>
            <li><span class="end"></span>Applications</li>
          </ul>
        </section>
        <aside class="dock">
          <cad-toolbar vertical .items=${DOCK_A}></cad-toolbar>
          <cad-toolbar vertical .items=${DOCK_B}></cad-toolbar>
        </aside>
      </main>
      <div class="bottom">
        <cad-toolbar .items=${BOTTOM}></cad-toolbar>
        <svg class="logo" viewBox="0 0 27 18">
          <path d="M8 1h4l-2 3h3l-5 3" fill="none" stroke="#e0482a" stroke-width="1.500"></path>
          <path d="M3 6h4c3 0 1 6-4 6z" fill="none" stroke="#2f3a9c" stroke-width="1.300"></path>
          <path d="M15 5c-4 0-4 3-2 4s0 3-4 3" fill="none" stroke="#e89a2a" stroke-width="1.500"></path>
          <text x="5" y="17">CATIA</text>
        </svg>
      </div>
      <footer class="status">
        <label>选择对象或命令<input type="text" /></label>
        <button aria-label="panel"><cad-icon name="pane"></cad-icon></button>
        <button aria-label="panel"><cad-icon name="pane"></cad-icon></button>
      </footer>
      <div class="mark">
        <svg viewBox="0 0 44 40">
          <path d="M16 2C7 2 1 8 1 16c0 5 2 8 6 11l-2 5 6-3c2 1 4 1 7 1c-2-10 5-16 14-16C30 6 24 2 16 2z" fill="#f8f8fb"></path>
          <path d="M30 14c-8 0-13 5-13 12s6 12 13 12c2 0 4 0 5-1l5 3-1-5c3-2 4-5 4-9c0-7-5-12-13-12z" fill="#f8f8fb"></path>
          <g fill="#77778a"><circle cx="10" cy="11" r="2"></circle><circle cx="22" cy="11" r="2"></circle><circle cx="26" cy="22" r="1.700"></circle><circle cx="35" cy="22" r="1.700"></circle></g>
        </svg>
        <span>睿龙RLT</span>
      </div>
    </div>`;
  }
}
